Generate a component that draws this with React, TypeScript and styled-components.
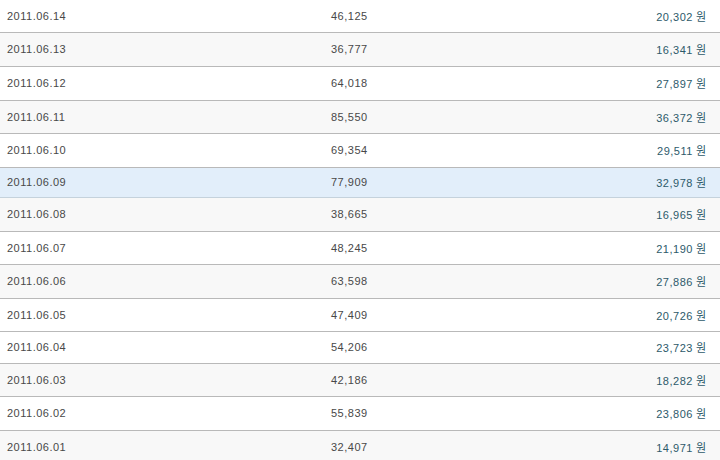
import React from "react";
import styled, { createGlobalStyle } from "styled-components";

const GlobalStyle = createGlobalStyle`
  html, body {
    margin: 0;
    padding: 0;
    background: #fff;
  }
  body {
    font-family: "Liberation Sans", "Noto Sans CJK KR", sans-serif;
    overflow: hidden;
  }
`;

const Table = styled.div`
  width: 720px;
  height: 460px;
  overflow: hidden;
  display: flex;
  flex-direction: column;
`;

type Tone = "white" | "gray" | "blue";

const bg: Record<Tone, string> = {
  white: "#ffffff",
  gray: "#f8f8f8",
  blue: "#e2eefa",
};

const Row = styled.div<{ $tone: Tone; $h: number }>`
  flex: 0 0 auto;
  box-sizing: border-box;
  height: ${(p) => p.$h}px;
  display: grid;
  grid-template-columns: 331px 1fr 200px;
  align-items: center;
  padding-bottom: 1px;
  background: ${(p) => bg[p.$tone]};
  border-bottom: 1px solid ${(p) => (p.$tone === "blue" ? "#c5d2dc" : "#b9b9b9")};
  font-size: 11px;
  letter-spacing: 0.5px;
  color: #484848;
`;

const DateCell = styled.div`
  padding-left: 7px;
`;

const CountCell = styled.div`
  text-align: left;
`;

const AmountCell = styled.div`
  text-align: right;
  padding-right: 14px;
  color: #2d5a6a;

  span {
    margin-left: 3px;
    font-family: "Noto Sans CJK KR", sans-serif;
    font-size: 11px;
    letter-spacing: 0;
  }
`;

interface IROW {
  date: string;
  count: string;
  amount: string;
  tone: Tone;
}

const rows: IROW[] = [
  { date: "2011.06.14", count: "46,125", amount: "20,302", tone: "white" },
  { date: "2011.06.13", count: "36,777", amount: "16,341", tone: "gray" },
  { date: "2011.06.12", count: "64,018", amount: "27,897", tone: "white" },
  { date: "2011.06.11", count: "85,550", amount: "36,372", tone: "gray" },
  { date: "2011.06.10", count: "69,354", amount: "29,511", tone: "white" },
  { date: "2011.06.09", count: "77,909", amount: "32,978", tone: "blue" },
  { date: "2011.06.08", count: "38,665", amount: "16,965", tone: "gray" },
  { date: "2011.06.07", count: "48,245", amount: "21,190", tone: "white" },
  { date: "2011.06.06", count: "63,598", amount: "27,886", tone: "gray" },
  { date: "2011.06.05", count: "47,409", amount: "20,726", tone: "white" },
  { date: "2011.06.04", count: "54,206", amount: "23,723", tone: "white" },
  { date: "2011.06.03", count: "42,186", amount: "18,282", tone: "gray" },
  { date: "2011.06.02", count: "55,839", amount: "23,806", tone: "white" },
  { date: "2011.06.01", count: "32,407", amount: "14,971", tone: "gray" },
];

// row heights as measured in the listing
const heights = [33, 34, 34, 33, 34, 30, 34, 33, 34, 33, 32, 33, 34, 34];

function App() {
  return (
    <>
      <GlobalStyle />
      <Table>
        {rows.map((r, idx) => (
          <Row key={r.date} $tone={r.tone} $h={heights[idx]}>
            <DateCell>{r.date}</DateCell>
            <CountCell>{r.count}</CountCell>
            <AmountCell>
              {r.amount}
              <span>원</span>
            </AmountCell>
          </Row>
        ))}
      </Table>
    </>
  );
}

export default App;
